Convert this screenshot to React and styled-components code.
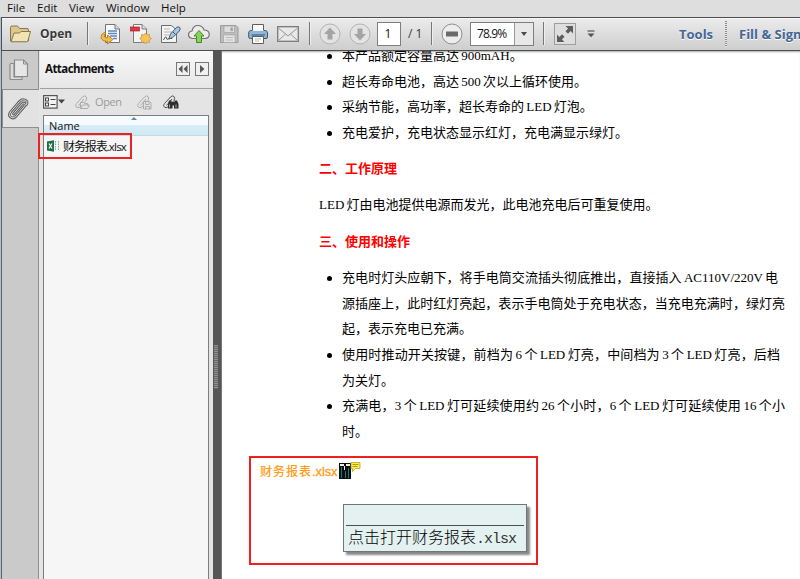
import React                                from 'react';
import styled, {createGlobalStyle, css}     from 'styled-components';

const uiFont  = `'Open Sans', 'Noto Sans', 'Noto Sans CJK SC', sans-serif`;
const docFont = `'Liberation Serif', 'Noto Sans CJK SC', serif`;

const GlobalStyle = createGlobalStyle`
    * { box-sizing: border-box; }
    body {
        margin: 0;
        overflow: hidden;
        background: #fff;
    }
    svg { display: block; }
`;

/* ---------- icons ---------- */

const FolderIcon = () => (
    <svg width="23" height="20" viewBox="0 0 23 20">
        <path d="M1.500 17V3.500Q1.500 2 3 2H8.500L10.500 4.500H18Q19.500 4.500 19.500 6V17Z" fill="#dcc88c" stroke="#857654"/>
        <path d="M2 17.800L5 9H10.500L12 7.500H21.500L19 16.500Q18.700 17.800 17.500 17.800Z" fill="#f1e3b2" stroke="#857654"/>
    </svg>
);

const ExportIcon = () => (
    <svg width="22" height="22" viewBox="0 0 22 22">
        <path d="M5.500 1.500H15L19.500 6V19.500H5.500Z" fill="#fafafa" stroke="#747474"/>
        <path d="M15 1.500V6H19.500" fill="#ddd" stroke="#747474"/>
        <path d="M8 8H17M8 10.500H17M10 13H17M13 15.500H17" stroke="#5789c4" strokeWidth="1.400"/>
        <path d="M5 9Q.8 11 1 14.500Q2 18.500 7.500 18.300V21L13 16.500L7.500 12V14.800Q4.500 14.800 4.300 13Q4.200 11.500 6 10Z" fill="#f4bc4c" stroke="#a87519" strokeWidth=".8"/>
    </svg>
);

const CreateIcon = () => (
    <svg width="22" height="22" viewBox="0 0 22 22">
        <path d="M3.500 1.500H12L16.500 6V19.500H3.500Z" fill="#f4f4f4" stroke="#7a7a7a"/>
        <path d="M12 1.500V6H16.500" fill="#ddd" stroke="#7a7a7a"/>
        <rect x=".5" y="4" width="9" height="4" fill="#e2353c" stroke="#ad2028" strokeWidth=".7"/>
        <path d="M15.500 10L17 12L19.500 11.500L19.300 14L21.500 15.500L19.300 17L19.500 19.500L17 19L15.500 21L14 19L11.500 19.500L11.700 17L9.500 15.500L11.700 14L11.500 11.500L14 12Z" fill="#f8c35b" stroke="#c79a42" strokeWidth=".8"/>
    </svg>
);

const SignIcon = () => (
    <svg width="21" height="22" viewBox="0 0 21 22">
        <path d="M1.500 2.500H11.500L16.500 7V19.500H1.500Z" fill="#f4f4f4" stroke="#6d6d6d"/>
        <path d="M4 6H10M4 9H12M4 12H9" stroke="#b5b5b5"/>
        <path d="M3.500 17Q6 12 6.500 15T9 15.500L12 15.500" fill="none" stroke="#555"/>
        <path d="M8.800 16L10.500 11L16.500 4.500Q18.500 3 19.700 4.500T19.300 8L12.800 14.500Z" fill="#a8c7e2" stroke="#47576a"/>
        <path d="M13 9L15.500 11.500" stroke="#47576a"/>
    </svg>
);

const CloudIcon = () => (
    <svg width="24" height="22" viewBox="0 0 24 22">
        <path d="M5.500 15.500Q1.500 15 1.500 11.500Q1.800 8.300 5 8Q6 2.500 11 2.500Q15.500 2.500 17 7Q22 7 22.300 11.300Q22.200 15.300 18 15.500Z" fill="#ececec" stroke="#707070" strokeWidth="1.200"/>
        <path d="M12 7.500L17 13H14.500V19.500H9.500V13H7Z" fill="#86d35c" stroke="#438b27"/>
    </svg>
);

const SaveIcon = () => (
    <svg width="19" height="20" viewBox="0 0 19 20">
        <path d="M.5 1.500H16L18 3.500V18.500H.5Z" fill="#bdbdbd" stroke="#9b9b9b"/>
        <rect x="4" y="2" width="10.500" height="6.500" fill="#dedede" stroke="#a3a3a3" strokeWidth=".7"/>
        <rect x="10.500" y="3.500" width="2.300" height="3.500" fill="#a0a0a0"/>
        <rect x="3.500" y="11" width="11.500" height="7.500" fill="#e5e5e5" stroke="#a3a3a3" strokeWidth=".7"/>
        <path d="M5.500 13.500H13M5.500 16H13" stroke="#bbb"/>
    </svg>
);

const PrinterIcon = () => (
    <svg width="22" height="22" viewBox="0 0 22 22">
        <path d="M4.500 9V1.500H15.500V9" fill="#fafafa" stroke="#5e5e5e"/>
        <path d="M2.500 7.500H17.500Q19.500 8 19.500 10V14Q19.500 15.500 18 15.500H2.500Q.7 15.500 .7 14V10Q.7 8 2.500 7.500Z" fill="#8db6da" stroke="#415468"/>
        <path d="M3.500 12H17" stroke="#35536f"/>
        <path d="M4.500 13.500H15.500V20.500H4.500Z" fill="#fff" stroke="#5e5e5e"/>
        <path d="M7 16H13M7 18H11" stroke="#bbb"/>
        <path d="M4.500 7.500H15.500" stroke="#e9f2fa"/>
    </svg>
);

const MailIcon = () => (
    <svg width="22" height="16" viewBox="0 0 22 16">
        <rect x=".7" y=".7" width="20.600" height="14.600" fill="#e9e9e9" stroke="#797979" strokeWidth="1.300"/>
        <path d="M2 2.500L11 10L20 2.500M2 14L8.500 8M20 14L13.500 8" fill="none" stroke="#969696"/>
    </svg>
);

const ArrowCircle = ({down}) => (
    <svg width="22" height="22" viewBox="0 0 22 22">
        <circle cx="11" cy="11" r="10" fill="#e3e3e3" stroke="#b3b3b3"/>
        <path d="M11 4.500L17 11H13.500V16.500H8.500V11H5Z" fill="#a4a4a4" transform={down ? 'rotate(180 11 11)' : undefined}/>
    </svg>
);

const MinusCircle = () => (
    <svg width="22" height="22" viewBox="0 0 22 22">
        <circle cx="11" cy="11" r="10" fill="#ededed" stroke="#8f8f8f"/>
        <rect x="5" y="8.500" width="12" height="5" rx=".5" fill="#6a6a6a"/>
    </svg>
);

const FullScreenIcon = () => (
    <svg width="22" height="22" viewBox="0 0 22 22">
        <rect x=".5" y=".5" width="21" height="21" fill="#dedede" stroke="#9d9d9d"/>
        <path d="M19 3V10.500L16.600 8.100L14 10.700L11.500 8.200L14.100 5.500L11.500 3Z" fill="#5d5d5d"/>
        <path d="M3 19V11.500L5.400 13.900L8 11.300L10.500 13.800L7.900 16.500L10.500 19Z" fill="#5d5d5d"/>
    </svg>
);

const OverflowIcon = () => (
    <svg width="8" height="8" viewBox="0 0 8 8">
        <path d="M.5 1H7.500" stroke="#555" strokeWidth="1.200"/>
        <path d="M.5 3.500H7.500L4 7.300Z" fill="#555"/>
    </svg>
);

const PagesIcon = () => (
    <svg width="20" height="22" viewBox="0 0 20 22">
        <path d="M1 5.500Q1 4.500 2 4.500H5V18H13V20.500H2Q1 20.500 1 19.500Z" fill="#dcdcdc" stroke="#8b8b8b" strokeWidth="1.200"/>
        <path d="M5.500 1H14.500L18.500 5V17.500H5.500Z" fill="#e6e6e6" stroke="#8b8b8b" strokeWidth="1.200"/>
        <path d="M14.500 1V5H18.500" fill="none" stroke="#8b8b8b"/>
    </svg>
);

const bigClip = 'M6.500 17L15 7Q16.500 5.500 17.800 6.500T17.300 9.500L8.500 19.800Q5.700 22 3.500 20T3.500 15L12.500 4.500Q15 2 18 3T19.500 7.500';

const ClipIcon = () => (
    <svg width="22" height="24" viewBox="0 0 22 24" fill="none" strokeLinecap="round">
        <path d={bigClip} stroke="#606060" strokeWidth="2.800"/>
        <path d={bigClip} stroke="#dcdcdc" strokeWidth="1"/>
    </svg>
);

const OptionsIcon = () => (
    <svg width="22" height="14" viewBox="0 0 22 14">
        <rect x=".6" y=".6" width="13.500" height="12.500" fill="#f2f2f2" stroke="#555" strokeWidth="1.200"/>
        <rect x="2.500" y="3" width="3" height="3" fill="none" stroke="#444"/>
        <rect x="2.500" y="8" width="3" height="3" fill="none" stroke="#444"/>
        <path d="M7.500 4.500H12.500M7.500 9.500H12.500" stroke="#444"/>
        <path d="M15 4.500H22L18.500 8.500Z" fill="#444"/>
    </svg>
);

const clipPath = 'M1.500 8.500L7.500 2Q9.500 0 11 1.500T11 5.500L5 12Q3 13.500 1.300 12T1.500 8.500M3.500 10.500L9 4';

const ClipOpenIcon = () => (
    <svg width="15" height="15" viewBox="0 0 15 15" fill="none" stroke="#acacac">
        <path d={clipPath}/>
        <path d="M5.500 13.500V7.500H8.500L9.500 8.500H12.500V10M5.500 13.500L7.500 10H14.500L12.500 13.500Z" fill="#e4e4e4"/>
    </svg>
);

const ClipSaveIcon = () => (
    <svg width="15" height="15" viewBox="0 0 15 15" fill="none" stroke="#acacac">
        <path d={clipPath}/>
        <path d="M6.500 6.500H12.500L14 8V14H6.500Z" fill="#e4e4e4"/>
        <path d="M8.500 7V9.500H12V7M8.500 14V11.500H12.500V14"/>
    </svg>
);

const ClipFindIcon = () => (
    <svg width="16" height="15" viewBox="0 0 16 15" fill="none" stroke="#555">
        <path d={clipPath}/>
        <path d="M6 5.500H8.500V7H11.500V5.500H14L15.500 9V13.500H11V10.500H9.500V13.500H5V9Z" fill="#2f2f2f" stroke="none"/>
        <path d="M6.500 9.500V12.500M13 9.500V12.500" stroke="#aaa"/>
    </svg>
);

const ExcelIcon = () => (
    <svg width="14" height="12" viewBox="0 0 14 12">
        <path d="M0 1.500L7 .3V11.700L0 10.500Z" fill="#1d7044"/>
        <path d="M2 3.500L5 8.500M5 3.500L2 8.500" stroke="#fff" strokeWidth="1.200"/>
        <path d="M8.500 1V11M11.500 1V11" stroke="#72ad8c" strokeDasharray="1.500 1"/>
    </svg>
);

const AttachMark = () => (
    <svg width="23" height="18" viewBox="0 0 23 18">
        <path d="M0 1H12V17H0Z" fill="#0a1010"/>
        <path d="M1 2H5V4H1ZM5 4H6V8H5ZM7 2H11V4H7Z" fill="#e8f0f0"/>
        <path d="M2.500 5V16M6.500 9V16M9.500 6V16" stroke="#1f7774"/>
        <path d="M12 .5H21V6.500H16.500L13.500 9.500V6.500H12Z" fill="#ffee3d" stroke="#a39a35" strokeWidth=".7"/>
        <path d="M13.500 2.500H19.500M13.500 4.500H18.500" stroke="#958b22" strokeWidth=".8"/>
    </svg>
);

/* ---------- window chrome ---------- */

const Window = styled.div`
    display: flex;
    flex-direction: column;
    width: 800px;
    height: 579px;
    overflow: hidden;
    font-family: ${uiFont};
    font-size: 12px;
    color: #111;
    background: #dedede;
`;

const MenuBar = styled.nav`
    display: flex;
    flex: none;
    height: 17px;
    padding-left: 7px;
    line-height: 15px;
    background: #dedede;
`;

const MenuItem = styled.span`
    width: ${p => p.$width}px;
    font-size: 11.5px;
    white-space: nowrap;
`;

const Frame = styled.div`
    display: flex;
    flex: 1;
    flex-direction: column;
    min-height: 0;
    border-left: 1px solid #a9c1d9;
`;

const Toolbar = styled.div`
    display: flex;
    flex: none;
    align-items: center;
    height: 34px;
    padding: 0 0 1px 7px;
    overflow: hidden;
    border: 1px solid #4e4e4e;
    border-right: 0;
    background: linear-gradient(#ececec, #cecece);
    box-shadow: inset 0 1px #f7f7f7;
`;

const Tool = styled.span`
    display: flex;
    flex: none;
    margin-left: ${p => p.$gap || 0}px;
`;

const ToolLabel = styled.span`
    flex: none;
    width: ${p => p.$width}px;
    margin-left: ${p => p.$gap || 0}px;
    font-size: ${p => p.$size || 12}px;
    font-weight: ${p => p.$plain ? 400 : 700};
    white-space: nowrap;
    color: ${p => p.$blue ? '#456796' : '#3a3a3a'};
    text-shadow: ${p => p.$plain ? 'none' : '0 1px #fff'};
`;

const Separator = styled.span`
    flex: none;
    width: ${p => p.$dotted ? 2 : 1}px;
    height: ${p => p.$dotted ? 26 : 23}px;
    margin-left: ${p => p.$gap}px;
    ${p => p.$dotted ? css`
        background: repeating-linear-gradient(#8c8c8c 0 1px, #e6e6e6 1px 2px);
    ` : css`
        background: #777;
        box-shadow: 1px 0 #efefef;
    `}
`;

const PageInput = styled.span`
    flex: none;
    width: 24px;
    height: 24px;
    margin-left: 6px;
    padding-right: 2px;
    border: 1px solid #7e7e7e;
    font-size: 12px;
    line-height: 22px;
    text-align: center;
    background: #fff;
`;

const ZoomSelect = styled.span`
    display: flex;
    flex: none;
    width: 64px;
    height: 24px;
    margin-left: 7px;
    border: 1px solid #7e7e7e;
    line-height: 22px;
    background: #fff;
`;

const ZoomValue = styled.span`
    width: 43px;
    padding-left: 6px;
    font-size: 12px;
    letter-spacing: -0.9px;
`;

const ZoomButton = styled.span`
    display: flex;
    flex: 1;
    align-items: center;
    justify-content: center;
    border-left: 1px solid #999;
    background: #e8e8e8;
`;

const Caret = styled.span`
    border: 3.5px solid transparent;
    border-top: 4px solid #4a4a4a;
    border-bottom: 0;
`;

/* ---------- side panel ---------- */

const Body = styled.div`
    display: flex;
    flex: 1;
    min-height: 0;
    border-left: 1px solid #626262;
`;

const Rail = styled.div`
    flex: none;
    width: 37px;
    border-right: 1px solid #8e8e8e;
    background: #cacaca;
`;

const RailTab = styled.div`
    display: flex;
    align-items: center;
    justify-content: center;
    height: 38px;
    padding-right: 3px;
    ${p => p.$active && css`
        height: 39px;
        width: 37px;
        padding-right: 6px;
        border: 1px solid #8e8e8e;
        border-width: 1px 0 1px 1px;
        background: #e2e2e2;
    `}
`;

const Panel = styled.aside`
    display: flex;
    flex: none;
    flex-direction: column;
    width: 174px;
    border-left: 1px solid #e6e6e6;
    background: #e4e4e4;
`;

const PanelHeader = styled.div`
    display: flex;
    flex: none;
    align-items: center;
    height: 38px;
    padding: 0 4px 2px 5px;
    border-bottom: 1px solid #a0a0a0;
    background: linear-gradient(#f9f9f9, #e6e6e6);
`;

const PanelTitle = styled.span`
    flex: 1;
    font-size: 11.5px;
    font-weight: 700;
    letter-spacing: -0.55px;
`;

const PanelButton = styled.span`
    display: flex;
    align-items: center;
    justify-content: center;
    width: 14px;
    height: 14px;
    margin-left: 5px;
    border: 1px solid #777;
    background: #f0f0f0;
`;

const PanelTools = styled.div`
    display: flex;
    flex: none;
    align-items: center;
    height: 26px;
    padding-left: 3px;
`;

const PanelToolLabel = styled.span`
    width: 42px;
    margin-left: 5px;
    font-size: 11px;
    letter-spacing: -0.4px;
    line-height: 13px;
    padding-bottom: 2px;
    color: #9b9b9b;
`;

const FileList = styled.div`
    position: relative;
    flex: 1;
    margin: 0 4px 0 3px;
    border: 1px solid #7d7d7d;
    border-bottom: 0;
    background: #f6f6f6;
`;

const ListHeader = styled.div`
    display: flex;
    height: 20px;
    padding: 1px 0 0 5px;
    border-bottom: 1px solid #bcdcea;
    font-size: 11px;
    line-height: 18px;
    background: linear-gradient(#f5fbfe 45%, #d8edf7 50%, #cfe9f5);
`;

const ColumnName = styled.span`
    width: 82px;
`;

const SortMark = styled.span`
    width: 0;
    height: 0;
    border: 3px solid transparent;
    border-top: 0;
    border-bottom: 3px solid #5c8aa5;
`;

const FileRow = styled.div`
    display: flex;
    align-items: center;
    height: 20px;
    padding-left: 3px;
`;

const FileName = styled.span`
    margin-left: 2px;
    font-size: 12px;
    letter-spacing: -1.1px;
    white-space: nowrap;
`;

const FileNameExt = styled.span`
    font-size: 11.5px;
    letter-spacing: -0.8px;
`;

const RowHighlight = styled.div`
    position: absolute;
    top: 17px;
    left: -6px;
    width: 94px;
    height: 26px;
    border: 2px solid #f11f1f;
`;

const Splitter = styled.div`
    display: flex;
    flex: none;
    align-items: center;
    width: 9px;
    padding: 0 0 0 1px;
    border-right: 1px solid #777;
    background: #555;
`;

const Grip = styled.span`
    width: 4px;
    height: 44px;
    margin-top: 104px;
    background: repeating-linear-gradient(#929292 0 1px, #666 1px 2px);
`;

/* ---------- document ---------- */

const Page = styled.main`
    flex: 1;
    overflow: hidden;
    padding-left: 97px;
    background: #fff;
    box-shadow: inset 0 2px 2px -1px #aaa;
    font-family: ${docFont};
    font-size: 13px;
    line-height: 25.6px;
    word-spacing: -1px;
    color: #000;
`;

const List = styled.ul`
    list-style: none;
    margin: ${p => p.$top}px 0 0;
    padding: 0;
`;

const Bullet = styled.li`
    display: flex;

    &::before {
        content: '';
        flex: none;
        width: 5px;
        height: 5px;
        margin: 11px 10px 0 8px;
        border-radius: 50%;
        background: #000;
    }
`;

const Line = styled.div`
    width: ${p => p.$width ? `${p.$width}px` : 'auto'};
    text-align-last: ${p => p.$width ? 'justify' : 'left'};
    white-space: nowrap;
`;

const Heading = styled.h2`
    margin: 10.5px 0 11px;
    font-size: 13px;
    font-weight: 700;
    color: #f00;
`;

const Callout = styled.section`
    width: 289px;
    height: 109px;
    margin: 11.5px 0 0 -70px;
    padding: 4px 0 0 9px;
    border: 2px solid #f11f1f;
`;

const CalloutTitle = styled.div`
    display: flex;
    align-items: flex-start;
    height: 42px;
    font-family: 'Liberation Sans', 'Noto Sans CJK SC', sans-serif;
    font-size: 12px;
    font-weight: 500;
    letter-spacing: 1px;
    line-height: 20px;
    color: #ff9c16;
`;

const FileExt = styled.span`
    margin-right: 1px;
    letter-spacing: -0.1px;
    font-size: 13px;
    font-weight: 400;
    -webkit-text-stroke: 0.3px #ff9c16;
`;

const Note = styled.div`
    width: 184px;
    height: 48px;
    margin-left: 83px;
    padding: 0 2px;
    border: 1px solid #6e7676;
    font-family: 'Liberation Mono', 'Noto Sans CJK SC', monospace;
    font-size: 16px;
    font-weight: 300;
    line-height: 26px;
    background: #e4f1f1;
    box-shadow: 3px 3px 2px #888;
`;

const NoteBody = styled.div`
    height: 25px;
    margin-top: 20px;
    padding-left: 2px;
    border-top: 1px solid #4a5050;
    white-space: nowrap;
`;

const NoteExt = styled.span`
    font-size: 15px;
    letter-spacing: -1px;
    color: #333;
`;

const menus = [['File', 30], ['Edit', 32], ['View', 37], ['Window', 55], ['Help', 30]];

const features = [
    '本产品额定容量高达 900mAH。',
    '超长寿命电池，高达 500 次以上循环使用。',
    '采纳节能，高功率，超长寿命的 LED 灯泡。',
    '充电爱护，充电状态显示红灯，充电满显示绿灯。'
];

// one entry per bullet, each with its wrapped lines and their set width
const steps = [
    [
        ['充电时灯头应朝下，将手电筒交流插头彻底推出，直接插入 AC110V/220V 电', 436],
        ['源插座上，此时红灯亮起，表示手电筒处于充电状态，当充电充满时，绿灯亮', 443],
        ['起，表示充电已充满。']
    ],
    [
        ['使用时推动开关按键，前档为 6 个 LED 灯亮，中间档为 3 个 LED 灯亮，后档', 438],
        ['为关灯。']
    ],
    [
        ['充满电，3 个 LED 灯可延续使用约 26 个小时，6 个 LED 灯可延续使用 16 个小', 443],
        ['时。']
    ]
];

const AppToolbar = () => (
    <Toolbar>
        <Tool><FolderIcon/></Tool>
        <ToolLabel $gap={8} $width={47}>Open</ToolLabel>
        <Separator $gap={0}/>
        <Tool $gap={12}><ExportIcon/></Tool>
        <Tool $gap={8}><CreateIcon/></Tool>
        <Tool $gap={8}><SignIcon/></Tool>
        <Tool $gap={6}><CloudIcon/></Tool>
        <Tool $gap={9}><SaveIcon/></Tool>
        <Tool $gap={9}><PrinterIcon/></Tool>
        <Tool $gap={7}><MailIcon/></Tool>
        <Separator $gap={10}/>
        <Tool $gap={9}><ArrowCircle/></Tool>
        <Tool $gap={8}><ArrowCircle down/></Tool>
        <PageInput>1</PageInput>
        <ToolLabel $plain $gap={7} $width={23}>/ 1</ToolLabel>
        <Separator $gap={0}/>
        <Tool $gap={9}><MinusCircle/></Tool>
        <ZoomSelect>
            <ZoomValue>78.9%</ZoomValue>
            <ZoomButton><Caret/></ZoomButton>
        </ZoomSelect>
        <Separator $gap={9}/>
        <Tool $gap={10}><FullScreenIcon/></Tool>
        <Tool $gap={11}><OverflowIcon/></Tool>
        <ToolLabel $blue $size={13} $gap={84} $width={46}>Tools</ToolLabel>
        <Separator $dotted $gap={0}/>
        <ToolLabel $blue $size={13} $gap={12} $width={80}>Fill &amp; Sign</ToolLabel>
    </Toolbar>
);

const Attachments = () => (
    <Panel>
        <PanelHeader>
            <PanelTitle>Attachments</PanelTitle>
            <PanelButton>
                <svg width="10" height="8" viewBox="0 0 10 8"><path d="M4.500 0V8L.5 4ZM9.500 0V8L5.500 4Z" fill="#555"/></svg>
            </PanelButton>
            <PanelButton>
                <svg width="5" height="8" viewBox="0 0 5 8"><path d="M0 0V8L4.500 4Z" fill="#555"/></svg>
            </PanelButton>
        </PanelHeader>
        <PanelTools>
            <OptionsIcon/>
            <Tool $gap={10}><ClipOpenIcon/></Tool>
            <PanelToolLabel>Open</PanelToolLabel>
            <Tool><ClipSaveIcon/></Tool>
            <Tool $gap={11}><ClipFindIcon/></Tool>
        </PanelTools>
        <FileList>
            <ListHeader>
                <ColumnName>Name</ColumnName>
                <SortMark/>
            </ListHeader>
            <FileRow>
                <ExcelIcon/>
                <FileName>财务报表<FileNameExt>.xlsx</FileNameExt></FileName>
            </FileRow>
            <RowHighlight/>
        </FileList>
    </Panel>
);

const Manual = () => (
    <Page>
        <List $top={-8}>
            {features.map(text => <Bullet key={text}><Line>{text}</Line></Bullet>)}
        </List>
        <Heading>二、工作原理</Heading>
        <Line>LED 灯由电池提供电源而发光，此电池充电后可重复使用。</Line>
        <Heading>三、使用和操作</Heading>
        <List $top={0}>
            {steps.map(lines => (
                <Bullet key={lines[0][0]}>
                    <div>
                        {lines.map(([text, width]) => <Line key={text} $width={width}>{text}</Line>)}
                    </div>
                </Bullet>
            ))}
        </List>
        <Callout>
            <CalloutTitle>
                财务报表<FileExt>.xlsx</FileExt>
                <AttachMark/>
            </CalloutTitle>
            <Note>
                <NoteBody>点击打开财务报表<NoteExt>.xlsx</NoteExt></NoteBody>
            </Note>
        </Callout>
    </Page>
);

const App = () => (
    <Window>
        <GlobalStyle/>
        <MenuBar>
            {menus.map(([name, width]) => <MenuItem key={name} $width={width}>{name}</MenuItem>)}
        </MenuBar>
        <Frame>
            <AppToolbar/>
            <Body>
                <Rail>
                    <RailTab><PagesIcon/></RailTab>
                    <RailTab $active><ClipIcon/></RailTab>
                </Rail>
                <Attachments/>
                <Splitter><Grip/></Splitter>
                <Manual/>
            </Body>
        </Frame>
    </Window>
);

export default App;
